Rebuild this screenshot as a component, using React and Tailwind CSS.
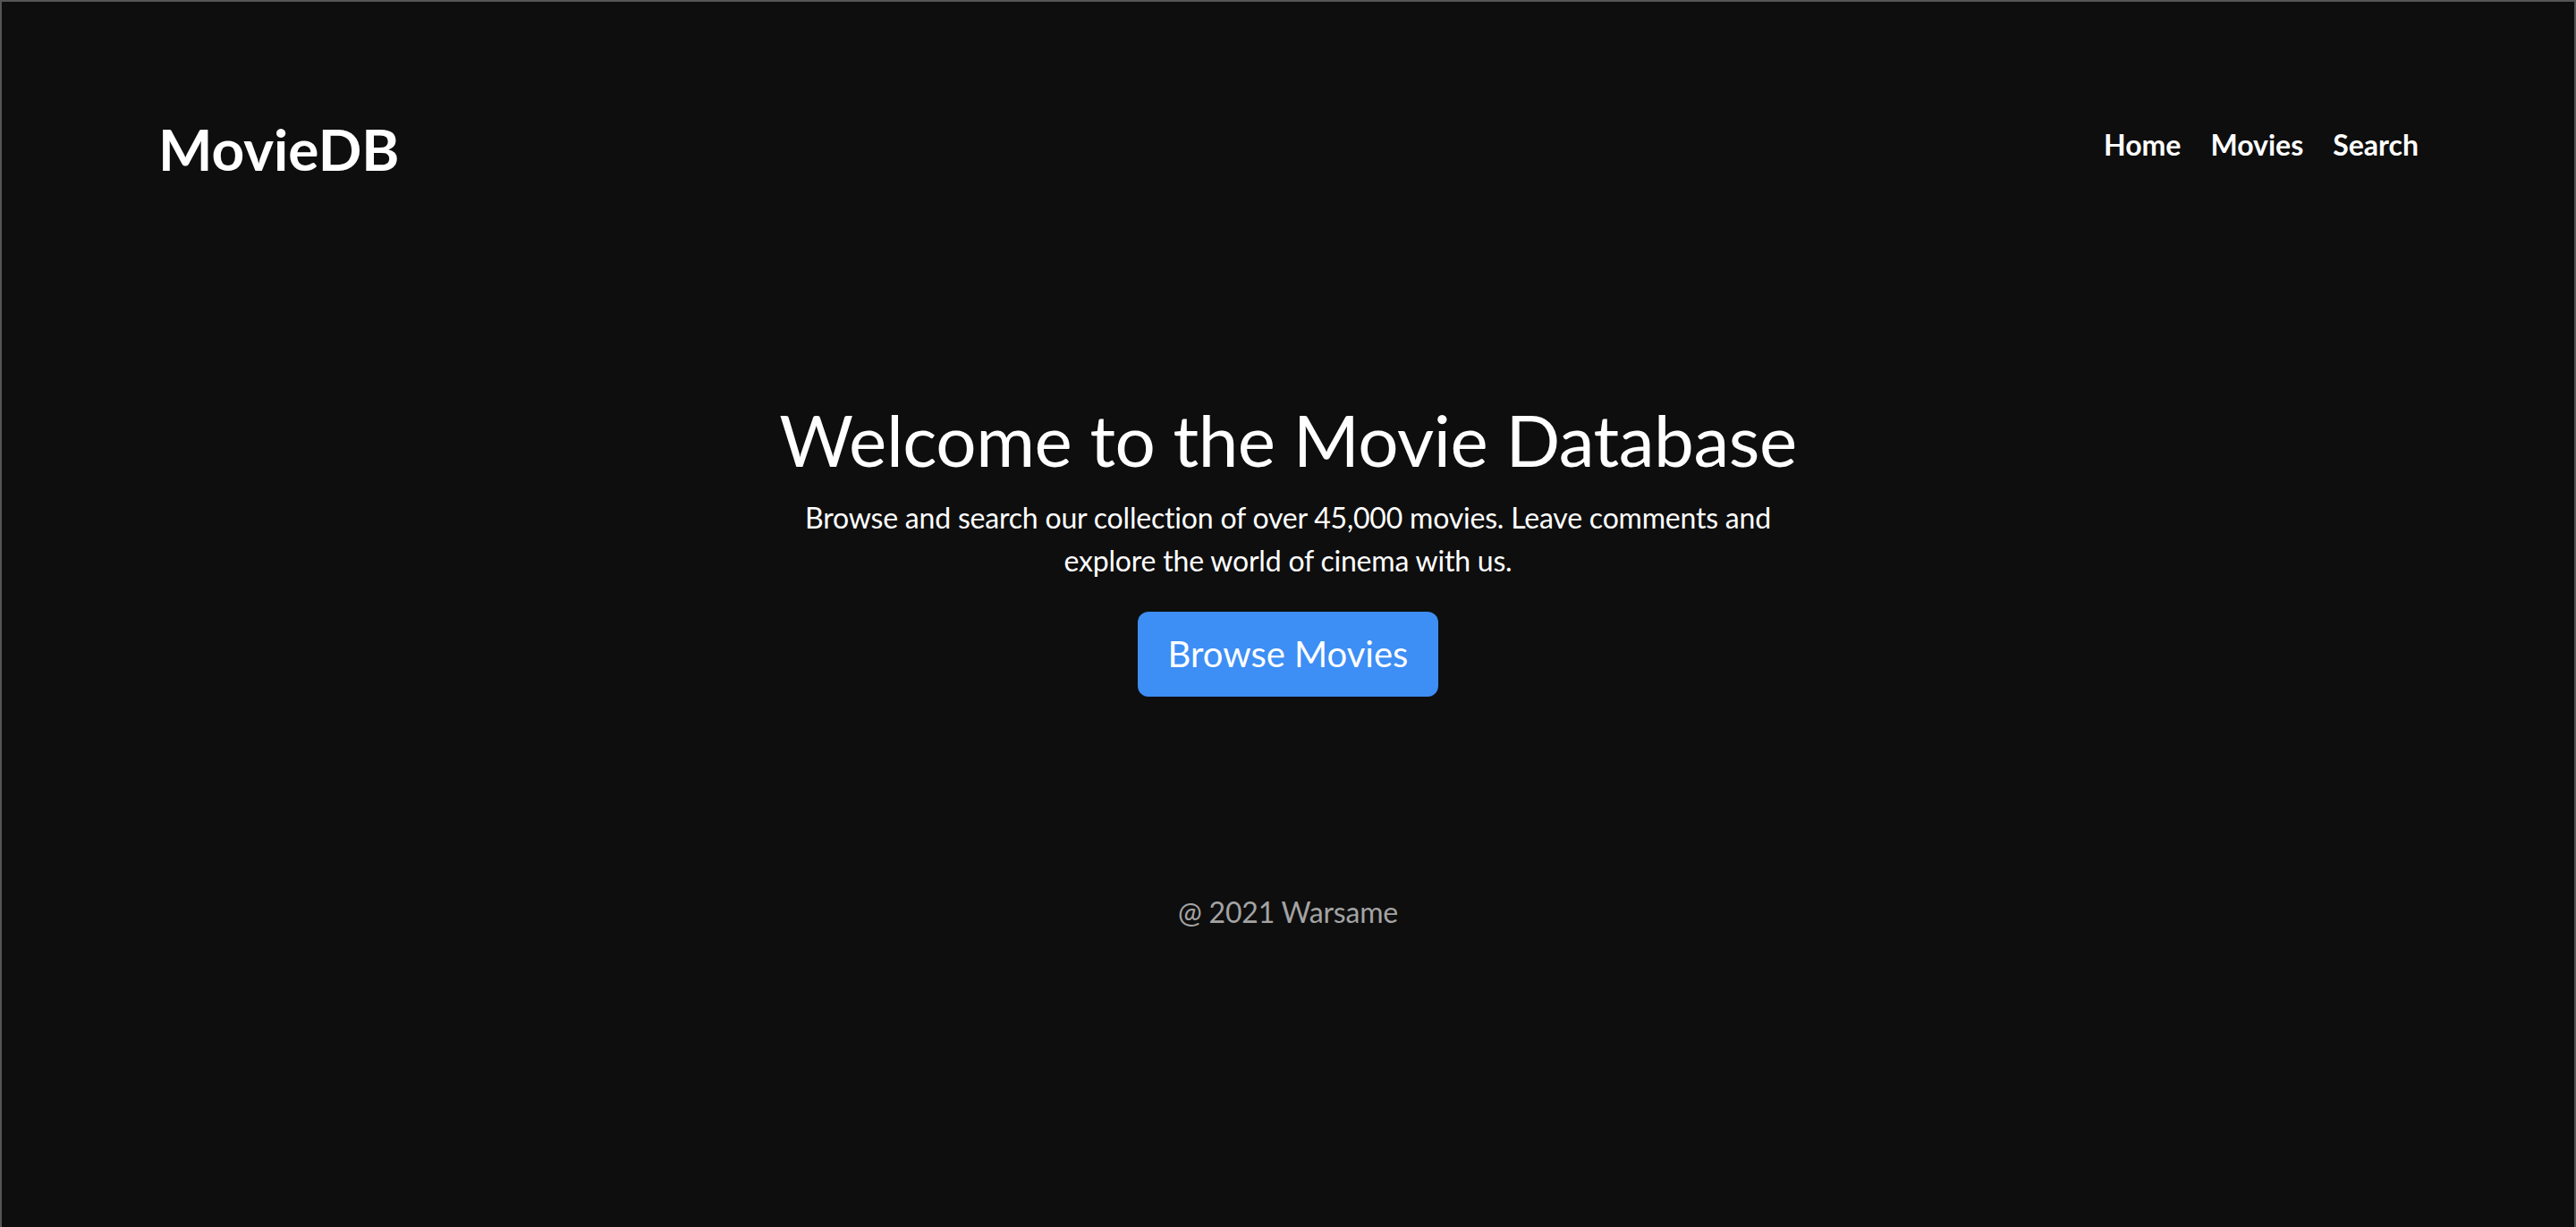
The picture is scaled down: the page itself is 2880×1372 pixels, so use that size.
export default function App() {
  return (
    <div className="min-h-[1372px] bg-[#0e0e0e] border-t-2 border-x-2 border-[#555555] text-white font-['Lato','Liberation_Sans',sans-serif]">
      <header className="flex items-start justify-between pt-[127px] pl-[175px] pr-[174px]">
        <div className="text-[64px] font-bold leading-[1.2]">MovieDB</div>
        <nav className="mt-[14px] flex gap-[33px] text-[32px] font-bold leading-[1.2]">
          <a href="#">Home</a>
          <a href="#">Movies</a>
          <a href="#">Search</a>
        </nav>
      </header>
      <main className="flex flex-col items-center text-center mt-[237px]">
        <h1 className="text-[80px] font-normal leading-[1.2] tracking-[-0.45px]">Welcome to the Movie Database</h1>
        <p className="mt-[16px] max-w-[1120px] text-[32px] leading-[48px] tracking-[-0.2px]">
          Browse and search our collection of over 45,000 movies. Leave comments and explore the world of cinema with us.
        </p>
        <button className="mt-[33px] h-[95px] px-[34px] rounded-[12px] bg-[#3d8ef5] text-[40px] leading-[1.2] text-white">
          Browse Movies
        </button>
      </main>
      <footer className="mt-[222px] text-center text-[32px] leading-[1.2] tracking-[-0.2px] text-[#a3a3a3]">
        @ 2021 Warsame
      </footer>
    </div>
  );
}
